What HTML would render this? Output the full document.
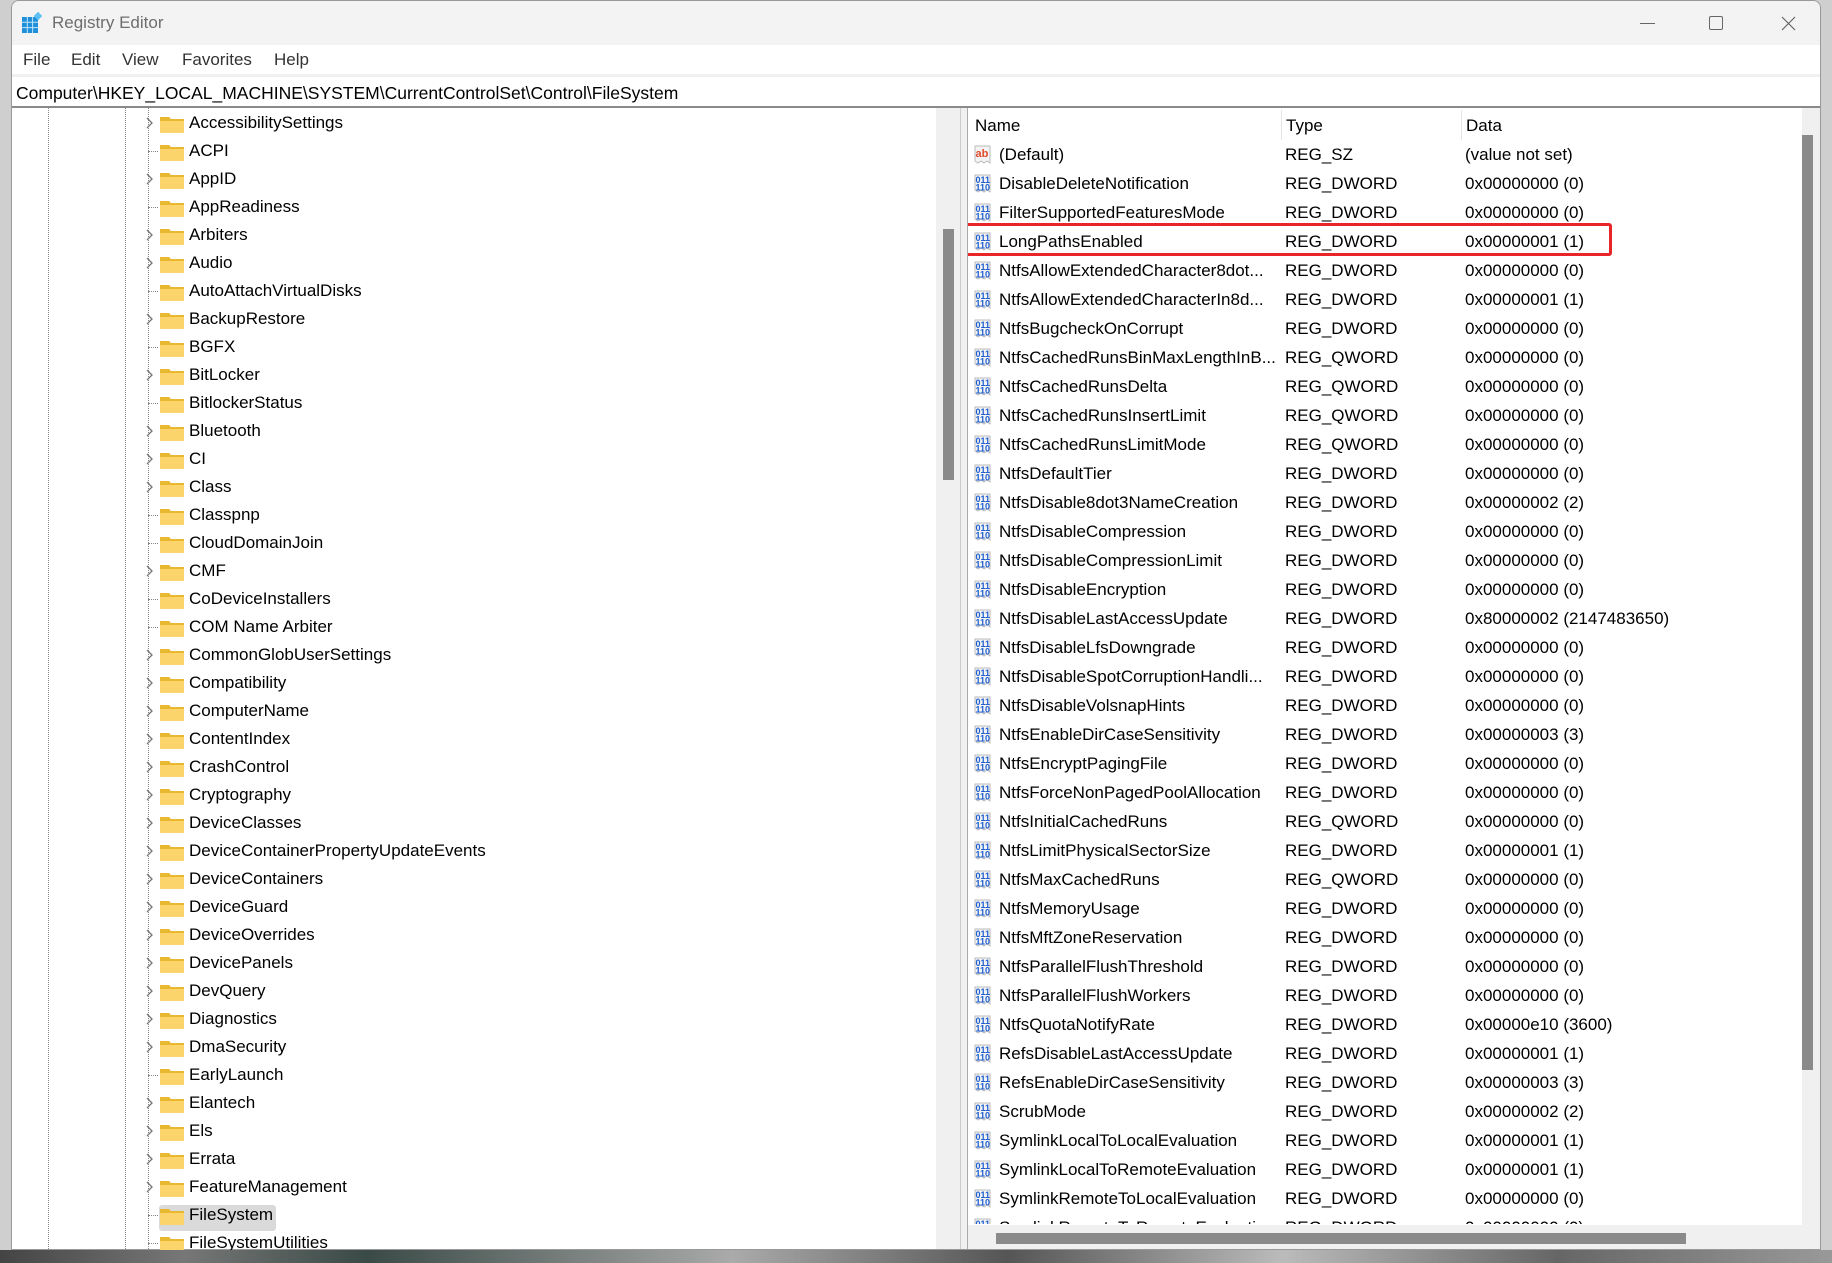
<!DOCTYPE html>
<html><head><meta charset="utf-8"><style>
*{margin:0;padding:0;box-sizing:border-box}
body{width:1832px;height:1263px;overflow:hidden;position:relative;background:#cfcfcf;font-family:"Liberation Sans",sans-serif;font-size:17px;color:#000}
.bg1{position:absolute;left:0;top:1250px;width:1832px;height:13px;background:linear-gradient(90deg,#444 0,#777 10%,#3a4a46 20%,#aaa 40%,#555 55%,#bbb 70%,#666 85%,#999 100%)}
.win{position:absolute;left:11px;top:0;width:1810px;height:1250px;background:#fff;border-radius:8px 8px 0 0;overflow:hidden;border:1px solid #999}
.title{position:absolute;left:0;top:0;width:100%;height:44px;background:#f3f3f3}
.title span{position:absolute;left:40px;top:12px;color:#6e6e6e;font-size:17px}
.menu{position:absolute;left:0;top:44px;height:29px;width:100%;background:#fff}
.menu span{position:absolute;top:5px;color:#333}
.addr{position:absolute;left:0;top:73px;width:100%;height:34px;border-top:3px solid #f0f0f0;border-bottom:2px solid #8a8a8a}
.addr span{position:absolute;left:4px;top:6px;font-size:17.5px}
.left{position:absolute;left:0;top:107px;width:956px;height:1143px;overflow:hidden}
.r{position:absolute;height:28px;line-height:28px;white-space:nowrap}
.chev{position:absolute;left:134px;width:10px;height:28px}
.fold{position:absolute;left:148px;top:5px}
.t{position:absolute;left:178px}
.vdot{position:absolute;top:0;width:0;height:1143px;border-left:1px dotted #888}
.hd{position:absolute;left:137px;width:10px;top:14px;border-top:1px dotted #888}
.right{position:absolute;left:956px;top:107px;width:840px;height:1117px;overflow:hidden}
.rr{position:absolute;left:0;height:29px;line-height:29px;white-space:nowrap;width:830px}
.rr .ic{position:absolute;left:6px;top:5px}
.rr .n{position:absolute;left:32px}
.rr .ty{position:absolute;left:318px}
.rr .d{position:absolute;left:498px}
</style></head><body>
<div class="bg1"></div>
<div class="win">
<div class="title">
<svg style="position:absolute;left:9px;top:11px" width="22" height="22" viewBox="0 0 22 22"><rect x="1" y="5" width="16" height="16" fill="#1e8fd8"/><g stroke="#bfe4fb" stroke-width="1"><line x1="6.3" y1="5" x2="6.3" y2="21"/><line x1="11.6" y1="5" x2="11.6" y2="21"/><line x1="1" y1="10.3" x2="17" y2="10.3"/><line x1="1" y1="15.6" x2="17" y2="15.6"/></g><rect x="14" y="1" width="6" height="6" fill="#5bc0f5" transform="rotate(45 17 4)"/></svg>
<span>Registry Editor</span>
<div style="position:absolute;left:1628px;top:22px;width:15px;border-top:1px solid #666"></div>
<div style="position:absolute;left:1697px;top:15px;width:14px;height:14px;border:1px solid #666;border-radius:2px"></div>
<svg style="position:absolute;left:1769px;top:15px" width="15" height="15"><path d="M1 1L14 14M14 1L1 14" stroke="#666" stroke-width="1.2"/></svg>
</div>
<div class="menu"><span style="left:11px">File</span><span style="left:59px">Edit</span><span style="left:110px">View</span><span style="left:170px">Favorites</span><span style="left:262px">Help</span></div>
<div class="addr"><span>Computer\HKEY_LOCAL_MACHINE\SYSTEM\CurrentControlSet\Control\FileSystem</span></div>

<div class="left">
<div class="vdot" style="left:36px"></div>
<div class="vdot" style="left:113px"></div>
<div class="vdot" style="left:136px"></div>
<div style="position:absolute;left:147px;top:1097px;width:117px;height:26px;background:#dadada;border-radius:3px"></div>
<div style="position:absolute;left:924px;top:0;width:24px;height:1143px;background:#f0f0f0"></div>
<div style="position:absolute;left:931px;top:121px;width:11px;height:251px;background:#8a8a8a"></div>
<div style="position:absolute;left:948px;top:0;width:8px;height:1143px;background:#f0f0f0;border-left:1px solid #ccc;border-right:1px solid #aaa"></div>
</div>

<div class="right">
<div style="position:absolute;left:7px;top:8px">Name</div>
<div style="position:absolute;left:313px;top:2px;height:30px;border-left:1px solid #e5e5e5"></div>
<div style="position:absolute;left:318px;top:8px">Type</div>
<div style="position:absolute;left:493px;top:2px;height:30px;border-left:1px solid #e5e5e5"></div>
<div style="position:absolute;left:498px;top:8px">Data</div>
<div style="position:absolute;left:-12px;top:115px;width:656px;height:33px;border:3px solid #e8262a;border-radius:3px"></div>
<div style="position:absolute;left:837px;top:0;width:22px;height:1117px;background:#f0f0f0"></div>
</div>
<div style="position:absolute;left:1790px;top:107px;width:20px;height:1143px;background:#f0f0f0"></div>
<div style="position:absolute;left:1790px;top:134px;width:11px;height:935px;background:#8a8a8a"></div>
<div style="position:absolute;left:956px;top:1224px;width:834px;height:26px;background:#f0f0f0"></div>
<div style="position:absolute;left:984px;top:1232px;width:690px;height:11px;background:#8a8a8a"></div>
</div>

<svg width="0" height="0" style="position:absolute"><defs>
<symbol id="f" viewBox="0 0 26 20"><path d="M1 3h9l2 2h13v14H1z" fill="#e8b830"/><path d="M1 7h24v12H1z" fill="#fbd46b"/></symbol>
<symbol id="c" viewBox="0 0 10 28"><path d="M2 9l5 5-5 5" fill="none" stroke="#777" stroke-width="1.3"/></symbol>
<symbol id="ab" viewBox="0 0 20 20"><path d="M2 1h15v17l-3-2-3 2-3-2-3 2-3-2z" fill="#f4f4f4" stroke="#bbb"/><text x="2.5" y="12" font-size="11" font-weight="bold" fill="#e0492b" font-family="Liberation Sans">ab</text></symbol>
<symbol id="bi" viewBox="0 0 20 20"><path d="M2 1h15v17l-3-2-3 2-3-2-3 2-3-2z" fill="#f4f4f4" stroke="#bbb"/><text x="2.5" y="9" font-size="9" font-weight="bold" fill="#1f5fd0" font-family="Liberation Sans">011</text><text x="2.5" y="16.5" font-size="9" font-weight="bold" fill="#1f5fd0" font-family="Liberation Sans">110</text></symbol>
</defs></svg>

<div style="position:absolute;left:11px;top:109px;width:924px;height:1141px;overflow:hidden;pointer-events:none">
<div class="r" style="top:0"><svg class="chev" viewBox="0 0 10 28"><use href="#c"/></svg><svg class="fold" width="26" height="20"><use href="#f"/></svg><span class="t">AccessibilitySettings</span></div>
<div class="r" style="top:28px"><div class="hd"></div><svg class="fold" width="26" height="20"><use href="#f"/></svg><span class="t">ACPI</span></div>
<div class="r" style="top:56px"><svg class="chev" viewBox="0 0 10 28"><use href="#c"/></svg><svg class="fold" width="26" height="20"><use href="#f"/></svg><span class="t">AppID</span></div>
<div class="r" style="top:84px"><div class="hd"></div><svg class="fold" width="26" height="20"><use href="#f"/></svg><span class="t">AppReadiness</span></div>
<div class="r" style="top:112px"><svg class="chev" viewBox="0 0 10 28"><use href="#c"/></svg><svg class="fold" width="26" height="20"><use href="#f"/></svg><span class="t">Arbiters</span></div>
<div class="r" style="top:140px"><svg class="chev" viewBox="0 0 10 28"><use href="#c"/></svg><svg class="fold" width="26" height="20"><use href="#f"/></svg><span class="t">Audio</span></div>
<div class="r" style="top:168px"><div class="hd"></div><svg class="fold" width="26" height="20"><use href="#f"/></svg><span class="t">AutoAttachVirtualDisks</span></div>
<div class="r" style="top:196px"><svg class="chev" viewBox="0 0 10 28"><use href="#c"/></svg><svg class="fold" width="26" height="20"><use href="#f"/></svg><span class="t">BackupRestore</span></div>
<div class="r" style="top:224px"><div class="hd"></div><svg class="fold" width="26" height="20"><use href="#f"/></svg><span class="t">BGFX</span></div>
<div class="r" style="top:252px"><svg class="chev" viewBox="0 0 10 28"><use href="#c"/></svg><svg class="fold" width="26" height="20"><use href="#f"/></svg><span class="t">BitLocker</span></div>
<div class="r" style="top:280px"><div class="hd"></div><svg class="fold" width="26" height="20"><use href="#f"/></svg><span class="t">BitlockerStatus</span></div>
<div class="r" style="top:308px"><svg class="chev" viewBox="0 0 10 28"><use href="#c"/></svg><svg class="fold" width="26" height="20"><use href="#f"/></svg><span class="t">Bluetooth</span></div>
<div class="r" style="top:336px"><svg class="chev" viewBox="0 0 10 28"><use href="#c"/></svg><svg class="fold" width="26" height="20"><use href="#f"/></svg><span class="t">CI</span></div>
<div class="r" style="top:364px"><svg class="chev" viewBox="0 0 10 28"><use href="#c"/></svg><svg class="fold" width="26" height="20"><use href="#f"/></svg><span class="t">Class</span></div>
<div class="r" style="top:392px"><div class="hd"></div><svg class="fold" width="26" height="20"><use href="#f"/></svg><span class="t">Classpnp</span></div>
<div class="r" style="top:420px"><div class="hd"></div><svg class="fold" width="26" height="20"><use href="#f"/></svg><span class="t">CloudDomainJoin</span></div>
<div class="r" style="top:448px"><svg class="chev" viewBox="0 0 10 28"><use href="#c"/></svg><svg class="fold" width="26" height="20"><use href="#f"/></svg><span class="t">CMF</span></div>
<div class="r" style="top:476px"><div class="hd"></div><svg class="fold" width="26" height="20"><use href="#f"/></svg><span class="t">CoDeviceInstallers</span></div>
<div class="r" style="top:504px"><div class="hd"></div><svg class="fold" width="26" height="20"><use href="#f"/></svg><span class="t">COM Name Arbiter</span></div>
<div class="r" style="top:532px"><svg class="chev" viewBox="0 0 10 28"><use href="#c"/></svg><svg class="fold" width="26" height="20"><use href="#f"/></svg><span class="t">CommonGlobUserSettings</span></div>
<div class="r" style="top:560px"><svg class="chev" viewBox="0 0 10 28"><use href="#c"/></svg><svg class="fold" width="26" height="20"><use href="#f"/></svg><span class="t">Compatibility</span></div>
<div class="r" style="top:588px"><svg class="chev" viewBox="0 0 10 28"><use href="#c"/></svg><svg class="fold" width="26" height="20"><use href="#f"/></svg><span class="t">ComputerName</span></div>
<div class="r" style="top:616px"><svg class="chev" viewBox="0 0 10 28"><use href="#c"/></svg><svg class="fold" width="26" height="20"><use href="#f"/></svg><span class="t">ContentIndex</span></div>
<div class="r" style="top:644px"><svg class="chev" viewBox="0 0 10 28"><use href="#c"/></svg><svg class="fold" width="26" height="20"><use href="#f"/></svg><span class="t">CrashControl</span></div>
<div class="r" style="top:672px"><svg class="chev" viewBox="0 0 10 28"><use href="#c"/></svg><svg class="fold" width="26" height="20"><use href="#f"/></svg><span class="t">Cryptography</span></div>
<div class="r" style="top:700px"><svg class="chev" viewBox="0 0 10 28"><use href="#c"/></svg><svg class="fold" width="26" height="20"><use href="#f"/></svg><span class="t">DeviceClasses</span></div>
<div class="r" style="top:728px"><svg class="chev" viewBox="0 0 10 28"><use href="#c"/></svg><svg class="fold" width="26" height="20"><use href="#f"/></svg><span class="t">DeviceContainerPropertyUpdateEvents</span></div>
<div class="r" style="top:756px"><svg class="chev" viewBox="0 0 10 28"><use href="#c"/></svg><svg class="fold" width="26" height="20"><use href="#f"/></svg><span class="t">DeviceContainers</span></div>
<div class="r" style="top:784px"><svg class="chev" viewBox="0 0 10 28"><use href="#c"/></svg><svg class="fold" width="26" height="20"><use href="#f"/></svg><span class="t">DeviceGuard</span></div>
<div class="r" style="top:812px"><svg class="chev" viewBox="0 0 10 28"><use href="#c"/></svg><svg class="fold" width="26" height="20"><use href="#f"/></svg><span class="t">DeviceOverrides</span></div>
<div class="r" style="top:840px"><svg class="chev" viewBox="0 0 10 28"><use href="#c"/></svg><svg class="fold" width="26" height="20"><use href="#f"/></svg><span class="t">DevicePanels</span></div>
<div class="r" style="top:868px"><svg class="chev" viewBox="0 0 10 28"><use href="#c"/></svg><svg class="fold" width="26" height="20"><use href="#f"/></svg><span class="t">DevQuery</span></div>
<div class="r" style="top:896px"><svg class="chev" viewBox="0 0 10 28"><use href="#c"/></svg><svg class="fold" width="26" height="20"><use href="#f"/></svg><span class="t">Diagnostics</span></div>
<div class="r" style="top:924px"><svg class="chev" viewBox="0 0 10 28"><use href="#c"/></svg><svg class="fold" width="26" height="20"><use href="#f"/></svg><span class="t">DmaSecurity</span></div>
<div class="r" style="top:952px"><div class="hd"></div><svg class="fold" width="26" height="20"><use href="#f"/></svg><span class="t">EarlyLaunch</span></div>
<div class="r" style="top:980px"><svg class="chev" viewBox="0 0 10 28"><use href="#c"/></svg><svg class="fold" width="26" height="20"><use href="#f"/></svg><span class="t">Elantech</span></div>
<div class="r" style="top:1008px"><svg class="chev" viewBox="0 0 10 28"><use href="#c"/></svg><svg class="fold" width="26" height="20"><use href="#f"/></svg><span class="t">Els</span></div>
<div class="r" style="top:1036px"><svg class="chev" viewBox="0 0 10 28"><use href="#c"/></svg><svg class="fold" width="26" height="20"><use href="#f"/></svg><span class="t">Errata</span></div>
<div class="r" style="top:1064px"><svg class="chev" viewBox="0 0 10 28"><use href="#c"/></svg><svg class="fold" width="26" height="20"><use href="#f"/></svg><span class="t">FeatureManagement</span></div>
<div class="r" style="top:1092px"><div class="hd"></div><svg class="fold" width="26" height="20"><use href="#f"/></svg><span class="t">FileSystem</span></div>
<div class="r" style="top:1120px"><div class="hd"></div><svg class="fold" width="26" height="20"><use href="#f"/></svg><span class="t">FileSystemUtilities</span></div>
</div>

<div style="position:absolute;left:967px;top:140px;width:830px;height:1084px;overflow:hidden">
<div class="rr" style="top:0"><svg class="ic" width="20" height="20"><use href="#ab"/></svg><span class="n">(Default)</span><span class="ty">REG_SZ</span><span class="d">(value not set)</span></div>
<div class="rr" style="top:29px"><svg class="ic" width="20" height="20"><use href="#bi"/></svg><span class="n">DisableDeleteNotification</span><span class="ty">REG_DWORD</span><span class="d">0x00000000 (0)</span></div>
<div class="rr" style="top:58px"><svg class="ic" width="20" height="20"><use href="#bi"/></svg><span class="n">FilterSupportedFeaturesMode</span><span class="ty">REG_DWORD</span><span class="d">0x00000000 (0)</span></div>
<div class="rr" style="top:87px"><svg class="ic" width="20" height="20"><use href="#bi"/></svg><span class="n">LongPathsEnabled</span><span class="ty">REG_DWORD</span><span class="d">0x00000001 (1)</span></div>
<div class="rr" style="top:116px"><svg class="ic" width="20" height="20"><use href="#bi"/></svg><span class="n">NtfsAllowExtendedCharacter8dot...</span><span class="ty">REG_DWORD</span><span class="d">0x00000000 (0)</span></div>
<div class="rr" style="top:145px"><svg class="ic" width="20" height="20"><use href="#bi"/></svg><span class="n">NtfsAllowExtendedCharacterIn8d...</span><span class="ty">REG_DWORD</span><span class="d">0x00000001 (1)</span></div>
<div class="rr" style="top:174px"><svg class="ic" width="20" height="20"><use href="#bi"/></svg><span class="n">NtfsBugcheckOnCorrupt</span><span class="ty">REG_DWORD</span><span class="d">0x00000000 (0)</span></div>
<div class="rr" style="top:203px"><svg class="ic" width="20" height="20"><use href="#bi"/></svg><span class="n">NtfsCachedRunsBinMaxLengthInB...</span><span class="ty">REG_QWORD</span><span class="d">0x00000000 (0)</span></div>
<div class="rr" style="top:232px"><svg class="ic" width="20" height="20"><use href="#bi"/></svg><span class="n">NtfsCachedRunsDelta</span><span class="ty">REG_QWORD</span><span class="d">0x00000000 (0)</span></div>
<div class="rr" style="top:261px"><svg class="ic" width="20" height="20"><use href="#bi"/></svg><span class="n">NtfsCachedRunsInsertLimit</span><span class="ty">REG_QWORD</span><span class="d">0x00000000 (0)</span></div>
<div class="rr" style="top:290px"><svg class="ic" width="20" height="20"><use href="#bi"/></svg><span class="n">NtfsCachedRunsLimitMode</span><span class="ty">REG_QWORD</span><span class="d">0x00000000 (0)</span></div>
<div class="rr" style="top:319px"><svg class="ic" width="20" height="20"><use href="#bi"/></svg><span class="n">NtfsDefaultTier</span><span class="ty">REG_DWORD</span><span class="d">0x00000000 (0)</span></div>
<div class="rr" style="top:348px"><svg class="ic" width="20" height="20"><use href="#bi"/></svg><span class="n">NtfsDisable8dot3NameCreation</span><span class="ty">REG_DWORD</span><span class="d">0x00000002 (2)</span></div>
<div class="rr" style="top:377px"><svg class="ic" width="20" height="20"><use href="#bi"/></svg><span class="n">NtfsDisableCompression</span><span class="ty">REG_DWORD</span><span class="d">0x00000000 (0)</span></div>
<div class="rr" style="top:406px"><svg class="ic" width="20" height="20"><use href="#bi"/></svg><span class="n">NtfsDisableCompressionLimit</span><span class="ty">REG_DWORD</span><span class="d">0x00000000 (0)</span></div>
<div class="rr" style="top:435px"><svg class="ic" width="20" height="20"><use href="#bi"/></svg><span class="n">NtfsDisableEncryption</span><span class="ty">REG_DWORD</span><span class="d">0x00000000 (0)</span></div>
<div class="rr" style="top:464px"><svg class="ic" width="20" height="20"><use href="#bi"/></svg><span class="n">NtfsDisableLastAccessUpdate</span><span class="ty">REG_DWORD</span><span class="d">0x80000002 (2147483650)</span></div>
<div class="rr" style="top:493px"><svg class="ic" width="20" height="20"><use href="#bi"/></svg><span class="n">NtfsDisableLfsDowngrade</span><span class="ty">REG_DWORD</span><span class="d">0x00000000 (0)</span></div>
<div class="rr" style="top:522px"><svg class="ic" width="20" height="20"><use href="#bi"/></svg><span class="n">NtfsDisableSpotCorruptionHandli...</span><span class="ty">REG_DWORD</span><span class="d">0x00000000 (0)</span></div>
<div class="rr" style="top:551px"><svg class="ic" width="20" height="20"><use href="#bi"/></svg><span class="n">NtfsDisableVolsnapHints</span><span class="ty">REG_DWORD</span><span class="d">0x00000000 (0)</span></div>
<div class="rr" style="top:580px"><svg class="ic" width="20" height="20"><use href="#bi"/></svg><span class="n">NtfsEnableDirCaseSensitivity</span><span class="ty">REG_DWORD</span><span class="d">0x00000003 (3)</span></div>
<div class="rr" style="top:609px"><svg class="ic" width="20" height="20"><use href="#bi"/></svg><span class="n">NtfsEncryptPagingFile</span><span class="ty">REG_DWORD</span><span class="d">0x00000000 (0)</span></div>
<div class="rr" style="top:638px"><svg class="ic" width="20" height="20"><use href="#bi"/></svg><span class="n">NtfsForceNonPagedPoolAllocation</span><span class="ty">REG_DWORD</span><span class="d">0x00000000 (0)</span></div>
<div class="rr" style="top:667px"><svg class="ic" width="20" height="20"><use href="#bi"/></svg><span class="n">NtfsInitialCachedRuns</span><span class="ty">REG_QWORD</span><span class="d">0x00000000 (0)</span></div>
<div class="rr" style="top:696px"><svg class="ic" width="20" height="20"><use href="#bi"/></svg><span class="n">NtfsLimitPhysicalSectorSize</span><span class="ty">REG_DWORD</span><span class="d">0x00000001 (1)</span></div>
<div class="rr" style="top:725px"><svg class="ic" width="20" height="20"><use href="#bi"/></svg><span class="n">NtfsMaxCachedRuns</span><span class="ty">REG_QWORD</span><span class="d">0x00000000 (0)</span></div>
<div class="rr" style="top:754px"><svg class="ic" width="20" height="20"><use href="#bi"/></svg><span class="n">NtfsMemoryUsage</span><span class="ty">REG_DWORD</span><span class="d">0x00000000 (0)</span></div>
<div class="rr" style="top:783px"><svg class="ic" width="20" height="20"><use href="#bi"/></svg><span class="n">NtfsMftZoneReservation</span><span class="ty">REG_DWORD</span><span class="d">0x00000000 (0)</span></div>
<div class="rr" style="top:812px"><svg class="ic" width="20" height="20"><use href="#bi"/></svg><span class="n">NtfsParallelFlushThreshold</span><span class="ty">REG_DWORD</span><span class="d">0x00000000 (0)</span></div>
<div class="rr" style="top:841px"><svg class="ic" width="20" height="20"><use href="#bi"/></svg><span class="n">NtfsParallelFlushWorkers</span><span class="ty">REG_DWORD</span><span class="d">0x00000000 (0)</span></div>
<div class="rr" style="top:870px"><svg class="ic" width="20" height="20"><use href="#bi"/></svg><span class="n">NtfsQuotaNotifyRate</span><span class="ty">REG_DWORD</span><span class="d">0x00000e10 (3600)</span></div>
<div class="rr" style="top:899px"><svg class="ic" width="20" height="20"><use href="#bi"/></svg><span class="n">RefsDisableLastAccessUpdate</span><span class="ty">REG_DWORD</span><span class="d">0x00000001 (1)</span></div>
<div class="rr" style="top:928px"><svg class="ic" width="20" height="20"><use href="#bi"/></svg><span class="n">RefsEnableDirCaseSensitivity</span><span class="ty">REG_DWORD</span><span class="d">0x00000003 (3)</span></div>
<div class="rr" style="top:957px"><svg class="ic" width="20" height="20"><use href="#bi"/></svg><span class="n">ScrubMode</span><span class="ty">REG_DWORD</span><span class="d">0x00000002 (2)</span></div>
<div class="rr" style="top:986px"><svg class="ic" width="20" height="20"><use href="#bi"/></svg><span class="n">SymlinkLocalToLocalEvaluation</span><span class="ty">REG_DWORD</span><span class="d">0x00000001 (1)</span></div>
<div class="rr" style="top:1015px"><svg class="ic" width="20" height="20"><use href="#bi"/></svg><span class="n">SymlinkLocalToRemoteEvaluation</span><span class="ty">REG_DWORD</span><span class="d">0x00000001 (1)</span></div>
<div class="rr" style="top:1044px"><svg class="ic" width="20" height="20"><use href="#bi"/></svg><span class="n">SymlinkRemoteToLocalEvaluation</span><span class="ty">REG_DWORD</span><span class="d">0x00000000 (0)</span></div>
<div class="rr" style="top:1073px"><svg class="ic" width="20" height="20"><use href="#bi"/></svg><span class="n">SymlinkRemoteToRemoteEvaluation</span><span class="ty">REG_DWORD</span><span class="d">0x00000000 (0)</span></div>
</div>
</body></html>
